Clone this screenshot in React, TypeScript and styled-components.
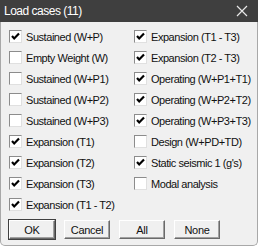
import styled, { createGlobalStyle } from 'styled-components';

const GlobalStyle = createGlobalStyle`
    html, body {
        margin: 0;
        padding: 0;
        background: #ffffff;
    }
`;

interface LoadCase {
    label: string;
    checked: boolean;
}

const leftColumn: LoadCase[] = [
    { label: 'Sustained (W+P)', checked: true },
    { label: 'Empty Weight (W)', checked: false },
    { label: 'Sustained (W+P1)', checked: false },
    { label: 'Sustained (W+P2)', checked: false },
    { label: 'Sustained (W+P3)', checked: false },
    { label: 'Expansion (T1)', checked: true },
    { label: 'Expansion (T2)', checked: true },
    { label: 'Expansion (T3)', checked: true },
    { label: 'Expansion (T1 - T2)', checked: true },
];

const rightColumn: LoadCase[] = [
    { label: 'Expansion (T1 - T3)', checked: true },
    { label: 'Expansion (T2 - T3)', checked: true },
    { label: 'Operating (W+P1+T1)', checked: true },
    { label: 'Operating (W+P2+T2)', checked: true },
    { label: 'Operating (W+P3+T3)', checked: true },
    { label: 'Design (W+PD+TD)', checked: false },
    { label: "Static seismic 1 (g's)", checked: true },
    { label: 'Modal analysis', checked: false },
];

const buttons = ['OK', 'Cancel', 'All', 'None'];

function Check({ checked }: { checked: boolean }) {
    return (
        <Box>
            {checked && (
                <svg width='11' height='11' viewBox='0 0 11 11'>
                    <polyline
                        points='2,5 4.2,7.4 9,2.4'
                        fill='none'
                        stroke='#000'
                        strokeWidth='2.2'
                    />
                </svg>
            )}
        </Box>
    );
}

function App() {
    return (
        <>
            <GlobalStyle />
            <Window>
                <TitleBar>
                    <Title>Load cases (11)</Title>
                    <CloseIcon width='12' height='12' viewBox='0 0 12 12'>
                        <path d='M1 1 L11 11 M11 1 L1 11' stroke='#e8e8e8' strokeWidth='1.2' />
                    </CloseIcon>
                </TitleBar>
                <Body>
                    <Columns>
                        <Column>
                            {leftColumn.map((item, i) => (
                                <Row key={i}>
                                    <Check checked={item.checked} />
                                    <Label>{item.label}</Label>
                                </Row>
                            ))}
                        </Column>
                        <Column>
                            {rightColumn.map((item, i) => (
                                <Row key={i}>
                                    <Check checked={item.checked} />
                                    <Label>{item.label}</Label>
                                </Row>
                            ))}
                        </Column>
                    </Columns>
                    <ButtonRow>
                        {buttons.map((b) => (
                            <Button key={b} $default={b === 'OK'}>
                                {b}
                            </Button>
                        ))}
                    </ButtonRow>
                </Body>
            </Window>
        </>
    );
}

export default App;

const Window = styled.div`
    width: 258px;
    height: 246px;
    display: flex;
    flex-direction: column;
    font-family: 'Liberation Sans', Arial, sans-serif;
    box-sizing: border-box;
    overflow: hidden;
`;

const TitleBar = styled.div`
    height: 22px;
    flex: none;
    background: #3f3f3f;
    display: flex;
    align-items: center;
    justify-content: space-between;
    padding: 0 10px 0 4px;
`;

const Title = styled.div`
    color: #ffffff;
    font-size: 12px;
    letter-spacing: -0.5px;
`;

const CloseIcon = styled.svg`
    display: block;
`;

const Body = styled.div`
    flex: 1;
    background: #f0f0f0;
    border: 1px solid #a8a8a8;
    border-top: none;
    border-radius: 0 0 5px 5px;
    display: flex;
    flex-direction: column;
    padding: 4px 0 0 8px;
`;

const Columns = styled.div`
    display: grid;
    grid-template-columns: 125px 1fr;
`;

const Column = styled.div`
    display: flex;
    flex-direction: column;
`;

const Row = styled.div`
    height: 21px;
    display: flex;
    align-items: center;
    gap: 4px;
`;

const Box = styled.div`
    width: 11px;
    height: 11px;
    flex: none;
    background: #ffffff;
    border-top: 1px solid #8c8c8c;
    border-left: 1px solid #8c8c8c;
    border-right: 1px solid #e0e0e0;
    border-bottom: 1px solid #e0e0e0;
    display: flex;
    align-items: center;
    justify-content: center;
`;

const Label = styled.span`
    font-size: 11px;
    letter-spacing: -0.45px;
    color: #111111;
    white-space: nowrap;
`;

const ButtonRow = styled.div`
    display: flex;
    gap: 9px;
    margin-top: 5px;
`;

const Button = styled.div<{ $default: boolean }>`
    width: 46px;
    height: 19px;
    box-sizing: border-box;
    display: flex;
    align-items: center;
    justify-content: center;
    font-size: 11px;
    letter-spacing: -0.3px;
    color: #111111;
    background: #f0f0f0;
    border-top: 1px solid #ffffff;
    border-left: 1px solid #ffffff;
    border-right: 1px solid #6a6a6a;
    border-bottom: 1px solid #6a6a6a;
    box-shadow: ${(p) =>
        p.$default
            ? '0 0 0 1px #404040, inset -1px -1px 0 #a0a0a0'
            : 'inset -1px -1px 0 #a0a0a0'};
`;
